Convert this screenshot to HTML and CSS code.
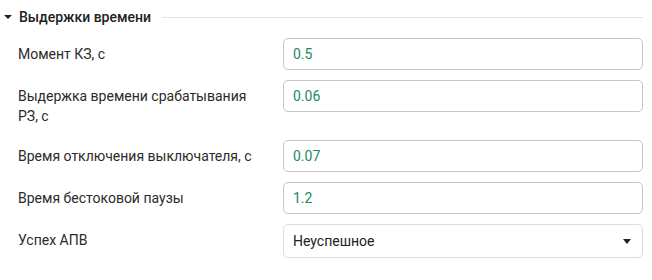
FILE: index.html
```html
<!DOCTYPE html>
<html lang="ru">
<head>
  <meta charset="UTF-8">
  <meta name="viewport" content="width=device-width, initial-scale=1.0">
  <title>Выдержки времени</title>
  <link rel="stylesheet" href="styles.css">
</head>
<body>
  <section class="group">
    <div class="group-head">
      <span class="caret"></span>
      <span class="group-title">Выдержки времени</span>
      <span class="group-line"></span>
    </div>

    <div class="fields">
      <label class="field-label" for="t-kz">Момент КЗ, с</label>
      <input class="field-input" type="text" id="t-kz" value="0.5">

      <label class="field-label" for="t-rz">Выдержка времени срабатывания РЗ, с</label>
      <input class="field-input" type="text" id="t-rz" value="0.06">

      <label class="field-label" for="t-off">Время отключения выключателя, с</label>
      <input class="field-input" type="text" id="t-off" value="0.07">

      <label class="field-label" for="t-pause">Время бестоковой паузы</label>
      <input class="field-input" type="text" id="t-pause" value="1.2">

      <label class="field-label" for="apv">Успех АПВ</label>
      <div class="select-wrap">
        <select class="field-select" id="apv">
          <option>Неуспешное</option>
          <option>Успешное</option>
        </select>
        <span class="select-arrow"></span>
      </div>
    </div>
  </section>
</body>
</html>
```

FILE: styles.css
```css
body {
  margin: 0;
  font-family: Roboto, "Liberation Sans", Arial, sans-serif;
  font-size: 14px;
  color: #333;
  background: #fff;
}
.group {
  padding: 7px 9px 0 4px;
}
.group-head {
  display: flex;
  align-items: center;
  height: 20px;
}
.caret {
  width: 0;
  height: 0;
  border-left: 4px solid transparent;
  border-right: 4px solid transparent;
  border-top: 4px solid #222;
  margin-right: 7px;
}
.group-title {
  font-weight: 500;
  color: #222;
}
.group-line {
  flex: 1;
  height: 1px;
  background: #e3e3e3;
  margin-left: 11px;
}
.fields {
  display: grid;
  grid-template-columns: 1fr 360px;
  row-gap: 10px;
  margin-top: 11px;
  padding-left: 14px;
}
.field-label {
  padding: 6px 25px 4px 0;
  line-height: 20px;
  color: #2b2b2b;
}
.field-input {
  box-sizing: border-box;
  height: 32px;
  margin: 0;
  padding: 0 9px;
  border: 1px solid #c6c6c6;
  border-radius: 5px;
  font-family: inherit;
  font-size: 14px;
  color: #1c8a5c;
  outline: none;
}
.select-wrap {
  position: relative;
}
.field-select {
  box-sizing: border-box;
  width: 100%;
  height: 34px;
  margin: 0;
  padding: 0 30px 0 9px;
  border: 1px solid #dcdcdc;
  border-radius: 5px;
  background: #fff;
  font-family: inherit;
  font-size: 14px;
  color: #222;
  appearance: none;
  -webkit-appearance: none;
  outline: none;
}
.select-arrow {
  position: absolute;
  right: 12px;
  top: 15px;
  width: 0;
  height: 0;
  border-left: 4px solid transparent;
  border-right: 4px solid transparent;
  border-top: 5px solid #222;
  pointer-events: none;
}
```
